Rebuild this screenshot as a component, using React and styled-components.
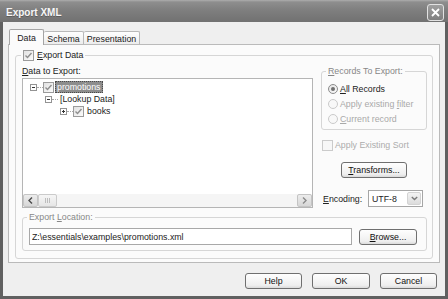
import React from "react";
import styled, { createGlobalStyle } from "styled-components";

const FS = "8.8px";

const Global = createGlobalStyle`
  html, body { margin: 0; padding: 0; background: #fff; }
  body { font-family: "Liberation Sans", Arial, sans-serif; font-size: ${FS}; color: #222; }
  * { box-sizing: border-box; }
`;

const Window = styled.div`
  width: 448px;
  height: 299px;
  display: flex;
  flex-direction: column;
  background: #606060;
  overflow: hidden;
`;

const TitleBar = styled.div`
  height: 22px;
  flex: none;
  display: flex;
  align-items: center;
  justify-content: space-between;
  padding: 0 4px 0 6px;
  background: linear-gradient(#adadad 0, #8e8e8e 2px, #7f7f7f 45%, #717171 100%);
`;

const Title = styled.span`
  font: bold 10px "Liberation Sans", Arial, sans-serif;
  color: #f7f7f7;
  text-shadow: 0 1px 0 #5c5c5c;
  margin-top: 3px;
`;

const CloseBtn = styled.div`
  width: 17px;
  height: 17px;
  margin-top: 3px;
  border: 1px solid #e2e2e2;
  border-radius: 3px;
  background: linear-gradient(#a0a0a0, #7e7e7e);
  display: flex;
  align-items: center;
  justify-content: center;
`;

const Client = styled.div`
  flex: 1;
  margin: 0 3px 3px;
  background: #efefef;
  padding: 7px 5px 0 5px;
  display: flex;
  flex-direction: column;
`;

const TabRow = styled.div`
  display: flex;
  align-items: flex-end;
  height: 16px;
  padding-left: 1px;
  margin-bottom: -1px;
  position: relative;
  z-index: 1;
`;

const Tab = styled.div`
  width: ${(p) => p.$w}px;
  height: ${(p) => (p.$active ? 16 : 14)}px;
  display: flex;
  align-items: center;
  justify-content: center;
  padding-top: ${(p) => (p.$active ? 1 : 2)}px;
  border: 1px solid ${(p) => (p.$active ? "#a4a4a4" : "#b9b9b9")};
  border-bottom: ${(p) => (p.$active ? "none" : "1px solid #bababa")};
  border-left: ${(p) => (p.$first ? "" : "none")};
  border-radius: 2px 2px 0 0;
  background: ${(p) => (p.$active ? "#fbfbfb" : "linear-gradient(#fefefe, #ececec)")};
  color: #1a1a1a;
`;

const Panel = styled.div`
  height: 219px;
  flex: none;
  border: 1px solid #bababa;
  background: #fbfbfb;
  padding: 2px 6px 0 6px;
`;

const Group = styled.fieldset`
  margin: ${(p) => p.$mt || 0}px 0 0 0;
  min-width: 0;
  border: 1px solid #d6d6d6;
  border-radius: 3px;
  padding: ${(p) => p.$pad};
`;

const Legend = styled.legend`
  padding: 0 2px;
  margin-left: ${(p) => p.$ml}px;
  height: 12px;
  line-height: 12px;
  display: flex;
  align-items: center;
  gap: 3px;
  color: ${(p) => (p.$muted ? "#878787" : "#222")};
`;

const Columns = styled.div`
  display: flex;
  gap: 8px;
  height: 143px;
`;

const LeftCol = styled.div`
  width: 291px;
  display: flex;
  flex-direction: column;
`;

const RightCol = styled.div`
  width: 106px;
  display: flex;
  flex-direction: column;
`;

const FieldLabel = styled.div`
  height: 12px;
  line-height: 12px;
  margin-bottom: 1px;
`;

const Tree = styled.div`
  height: 130px;
  border: 1px solid #b5b5b5;
  background: #fff;
  display: flex;
  flex-direction: column;
`;

const TreeBody = styled.div`
  flex: 1;
  padding-top: 2px;
`;

const TreeRow = styled.div`
  height: 12px;
  display: flex;
  align-items: center;
  padding-left: ${(p) => 7 + p.$level * 15}px;
`;

const Connector = styled.span`
  width: 6px;
  height: 1px;
  border-top: 1px dotted #a8a8a8;
`;

const NodeLabel = styled.span`
  height: 12px;
  line-height: 12px;
  padding: 0 2px;
  margin-left: ${(p) => p.$ml || 0}px;
  color: ${(p) => (p.$selected ? "#fff" : "#222")};
  background: ${(p) => (p.$selected ? "#8d8d8d" : "transparent")};
  outline: ${(p) => (p.$selected ? "1px dotted #4a4a4a" : "none")};
  outline-offset: -1px;
`;

const ScrollBar = styled.div`
  height: 13px;
  display: flex;
  background: #f5f5f5;
`;

const ScrollBtn = styled.div`
  width: 15px;
  height: 13px;
  border: 1px solid #c4c4c4;
  border-radius: 2px;
  background: linear-gradient(#ececec, #d7d7d7);
  display: flex;
  align-items: center;
  justify-content: center;
`;

const Thumb = styled.div`
  width: 19px;
  height: 13px;
  border: 1px solid #cbcbcb;
  border-radius: 2px;
  background: linear-gradient(#f6f6f6, #e6e6e6);
  display: flex;
  align-items: center;
  justify-content: center;
  gap: 1px;
`;

const Grip = styled.span`
  width: 1px;
  height: 5px;
  background: #bdbdbd;
`;

const Track = styled.div`
  flex: 1;
`;

const CheckBox = styled.span`
  width: 11px;
  height: 11px;
  flex: none;
  border: 1px solid ${(p) => (p.$disabled ? "#cbcbcb" : "#9b9b9b")};
  background: ${(p) => (p.$disabled ? "#f7f7f7" : "linear-gradient(135deg, #e2e2e2, #fbfbfb)")};
  display: flex;
  align-items: center;
  justify-content: center;
`;

const RadioRow = styled.div`
  height: 15px;
  display: flex;
  align-items: center;
  gap: 2px;
  color: ${(p) => (p.$disabled ? "#a9a9a9" : "#222")};
`;

const Radio = styled.span`
  width: 10px;
  height: 10px;
  flex: none;
  border-radius: 50%;
  border: 1px solid ${(p) => (p.$disabled ? "#cacaca" : "#8c8c8c")};
  background: ${(p) => (p.$disabled ? "#f8f8f8" : "linear-gradient(135deg, #e3e3e3, #fbfbfb)")};
  display: flex;
  align-items: center;
  justify-content: center;
  &::after {
    content: "";
    width: 4px;
    height: 4px;
    border-radius: 50%;
    background: ${(p) => (p.$checked ? "#707070" : "transparent")};
  }
`;

const SortRow = styled.div`
  height: 12px;
  margin-top: 9px;
  margin-left: 1px;
  display: flex;
  align-items: center;
  gap: 2px;
  color: #acacac;
`;

const Button = styled.button`
  width: ${(p) => p.$w}px;
  height: 16px;
  flex: none;
  margin: 0;
  padding: 0;
  border: 1px solid #6f6f6f;
  border-radius: 3px;
  background: linear-gradient(#fefefe, #efefef 80%, #dadada);
  font: ${FS} "Liberation Sans", Arial, sans-serif;
  color: #111;
  display: flex;
  align-items: center;
  justify-content: center;
  align-self: ${(p) => p.$align || "auto"};
  margin-top: ${(p) => p.$mt || 0}px;
`;

const EncodingRow = styled.div`
  height: 17px;
  margin-top: 12px;
  padding: 0 4px 0 2px;
  display: flex;
  align-items: center;
  justify-content: space-between;
`;

const Select = styled.div`
  width: 55px;
  height: 17px;
  border: 1px solid #a6a6a6;
  background: #fff;
  display: flex;
  align-items: center;
  justify-content: space-between;
  padding: 0 1px 0 3px;
`;

const SelectArrow = styled.span`
  width: 14px;
  height: 13px;
  border: 1px solid #d3d3d3;
  border-radius: 2px;
  background: linear-gradient(#f3f3f3, #dcdcdc);
  display: flex;
  align-items: center;
  justify-content: center;
`;

const LocationRow = styled.div`
  display: flex;
  align-items: center;
  gap: 7px;
  height: 17px;
`;

const TextBox = styled.input`
  width: 323px;
  height: 17px;
  margin: 0;
  border: 1px solid #a8a8a8;
  background: #fff;
  padding: 0 2px;
  font: ${FS} "Liberation Sans", Arial, sans-serif;
  color: #222;
  outline: none;
`;

const Footer = styled.div`
  display: flex;
  justify-content: flex-end;
  gap: 10px;
  padding: 10px 3px 0 0;
`;

const U = styled.span`
  text-decoration: underline;
  text-underline-offset: 1px;
`;

const Check = () => (
  <svg width="9" height="9" viewBox="0 0 9 9">
    <path d="M1.5 4.5 L3.5 6.5 L7.5 2" fill="none" stroke="#8e8e8e" strokeWidth="1.4" />
  </svg>
);

const Expander = ({ plus }) => (
  <svg width="7" height="7" viewBox="0 0 7 7" style={{ flex: "none" }}>
    <rect x="0.5" y="0.5" width="6" height="6" fill="#fff" stroke="#939393" />
    <path d="M2 3.5h3" stroke="#333" />
    {plus && <path d="M3.5 2v3" stroke="#333" />}
  </svg>
);

const Chevron = ({ dir }) => (
  <svg width="5" height="7" viewBox="0 0 5 7">
    <path
      d={dir === "left" ? "M4 0.5 L1 3.5 L4 6.5" : "M1 0.5 L4 3.5 L1 6.5"}
      fill="none"
      stroke={dir === "left" ? "#4a4a4a" : "#8a8a8a"}
      strokeWidth="1.4"
    />
  </svg>
);

export default function App() {
  return (
    <>
      <Global />
      <Window>
        <TitleBar>
          <Title>Export XML</Title>
          <CloseBtn>
            <svg width="9" height="9" viewBox="0 0 9 9">
              <path d="M1 1 L8 8 M8 1 L1 8" stroke="#fff" strokeWidth="1.8" />
            </svg>
          </CloseBtn>
        </TitleBar>
        <Client>
          <TabRow>
            <Tab $w={35} $active $first>Data</Tab>
            <Tab $w={40}>Schema</Tab>
            <Tab $w={56}>Presentation</Tab>
          </TabRow>
          <Panel>
            <Group $mt={2} $pad="4px 5px 7px 6px">
              <Legend $ml={-1}>
                <CheckBox>
                  <Check />
                </CheckBox>
                <span>
                  <U>E</U>xport Data
                </span>
              </Legend>
              <Columns>
                <LeftCol>
                  <FieldLabel>
                    <U>D</U>ata to Export:
                  </FieldLabel>
                  <Tree>
                    <TreeBody>
                      <TreeRow $level={0}>
                        <Expander />
                        <Connector />
                        <CheckBox>
                          <Check />
                        </CheckBox>
                        <NodeLabel $selected $ml={1}>promotions</NodeLabel>
                      </TreeRow>
                      <TreeRow $level={1}>
                        <Expander />
                        <Connector />
                        <NodeLabel>[Lookup Data]</NodeLabel>
                      </TreeRow>
                      <TreeRow $level={2}>
                        <Expander plus />
                        <Connector />
                        <CheckBox>
                          <Check />
                        </CheckBox>
                        <NodeLabel $ml={1}>books</NodeLabel>
                      </TreeRow>
                    </TreeBody>
                    <ScrollBar>
                      <ScrollBtn>
                        <Chevron dir="left" />
                      </ScrollBtn>
                      <Thumb>
                        <Grip />
                        <Grip />
                        <Grip />
                      </Thumb>
                      <Track />
                      <ScrollBtn>
                        <Chevron dir="right" />
                      </ScrollBtn>
                    </ScrollBar>
                  </Tree>
                </LeftCol>
                <RightCol>
                  <Group $pad="4px 4px 3px 6px">
                    <Legend $ml={-2} $muted>
                      <span>
                        <U>R</U>ecords To Export:
                      </span>
                    </Legend>
                    <RadioRow>
                      <Radio $checked />
                      <span>
                        <U>A</U>ll Records
                      </span>
                    </RadioRow>
                    <RadioRow $disabled>
                      <Radio $disabled />
                      <span>
                        Apply existing <U>f</U>ilter
                      </span>
                    </RadioRow>
                    <RadioRow $disabled>
                      <Radio $disabled />
                      <span>
                        <U>C</U>urrent record
                      </span>
                    </RadioRow>
                  </Group>
                  <SortRow>
                    <CheckBox $disabled />
                    <span>Apply Existing Sort</span>
                  </SortRow>
                  <Button $w={66} $mt={11} $align="center">
                    <span>
                      <U>T</U>ransforms...
                    </span>
                  </Button>
                  <EncodingRow>
                    <span>
                      <U>E</U>ncoding:
                    </span>
                    <Select>
                      <span>UTF-8</span>
                      <SelectArrow>
                        <svg width="7" height="5" viewBox="0 0 7 5">
                          <path d="M0.8 1 L3.5 3.6 L6.2 1" fill="none" stroke="#7a7a7a" strokeWidth="1.4" />
                        </svg>
                      </SelectArrow>
                    </Select>
                  </EncodingRow>
                </RightCol>
              </Columns>
              <Group $mt={3} $pad="5px 8px 5px 6px">
                <Legend $ml={-2} $muted>
                  <span>
                    Export <U>L</U>ocation:
                  </span>
                </Legend>
                <LocationRow>
                  <TextBox readOnly value="Z:\essentials\examples\promotions.xml" />
                  <Button $w={58}>
                    <span>
                      <U>B</U>rowse...
                    </span>
                  </Button>
                </LocationRow>
              </Group>
            </Group>
          </Panel>
          <Footer>
            <Button $w={57}>Help</Button>
            <Button $w={58}>OK</Button>
            <Button $w={57}>Cancel</Button>
          </Footer>
        </Client>
      </Window>
    </>
  );
}
